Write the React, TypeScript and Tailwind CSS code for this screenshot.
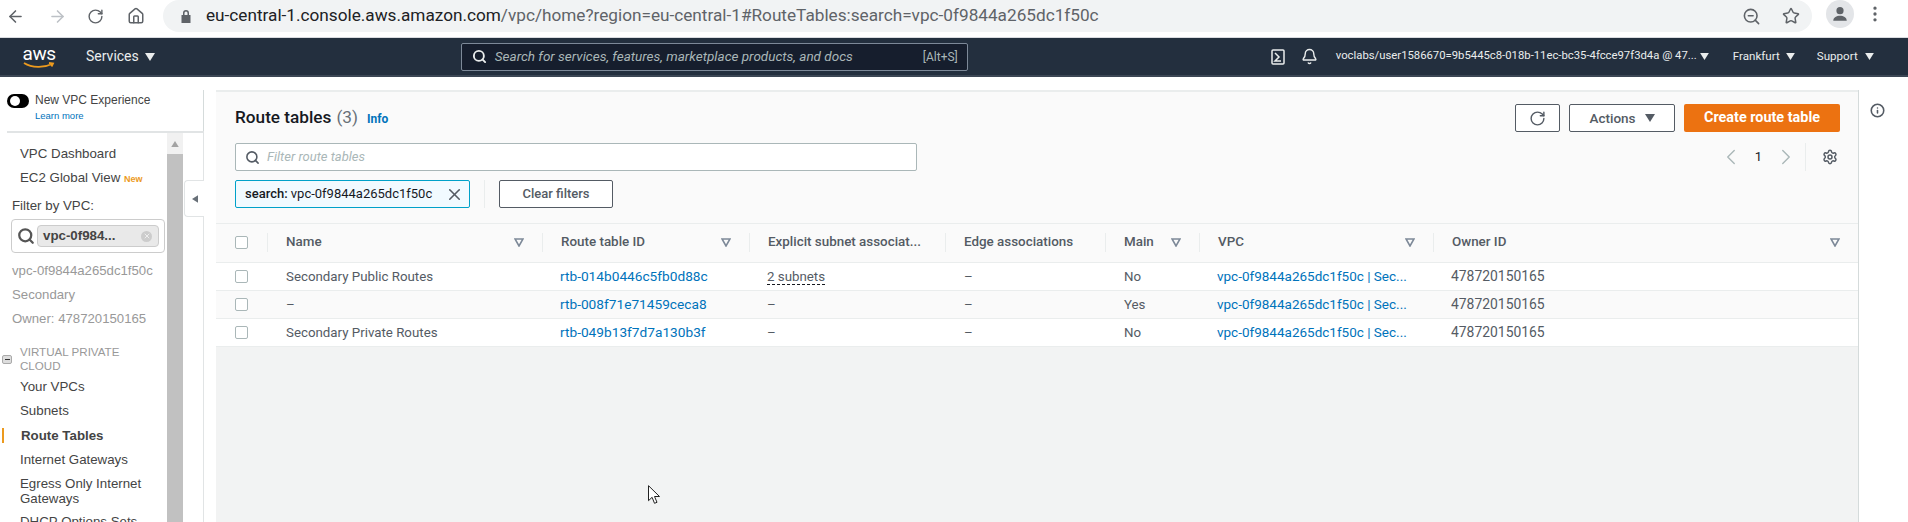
import { ArrowLeft, ArrowRight, ChevronLeft, ChevronRight, EllipsisVertical, House, Info, RotateCw, Search, Settings, Star, X, ZoomOut, Bell } from "lucide-react";

const cols = "grid grid-cols-[51px_275px_207px_196px_160px_94px_234px_1fr]";

const rows = [
  { name: "Secondary Public Routes", id: "rtb-014b0446c5fb0d88c", subnets: "2 subnets", main: "No", bg: "bg-white" },
  { name: "–", id: "rtb-008f71e71459ceca8", subnets: "–", main: "Yes", bg: "bg-[#fafafa]" },
  { name: "Secondary Private Routes", id: "rtb-049b13f7d7a130b3f", subnets: "–", main: "No", bg: "bg-white" },
];

function Caret({ className }: { className?: string }) {
  return (
    <svg viewBox="0 0 10 8" className={className} fill="currentColor">
      <path d="M0 0h10L5 8z" />
    </svg>
  );
}

function FilterIcon() {
  return (
    <svg viewBox="0 0 10 9" className="h-[9px] w-[10px] shrink-0 text-[#7d8998]" fill="none" stroke="currentColor" strokeWidth="1.6">
      <path d="M1 1h8L5 8z" />
    </svg>
  );
}

function Checkbox() {
  return <div className="size-[13px] rounded-[2px] border border-[#aab7b8] bg-white" />;
}

function HeadCell({ label, filter }: { label: string; filter?: boolean }) {
  return (
    <div className="flex items-center">
      <div className="flex h-[19px] w-full items-center justify-between border-l border-[#eaeded] pl-[18px] pr-[18px]">
        <span className="text-[13.400px] font-medium text-[#545b64]">{label}</span>
        {filter && <FilterIcon />}
      </div>
    </div>
  );
}

function BrowserBar() {
  return (
    <div className="flex h-[38px] items-start border-b border-[#dadce0] bg-white text-[#5f6368]">
      <div className="flex h-[32px] w-[163px] items-center pl-[6px]">
        <ArrowLeft className="size-[19px]" />
        <ArrowRight className="ml-[23px] size-[19px] text-[#bdc1c6]" />
        <RotateCw className="ml-[20px] size-[17px]" />
        <House className="ml-[23px] size-[18px]" />
      </div>
      <div className="flex h-[32px] w-[1649px] items-center rounded-r-full rounded-l-full bg-[#f1f3f4] pl-[17px] pr-[12px]">
        <svg viewBox="0 0 12 14" className="h-[14px] w-[12px]" fill="currentColor">
          <path d="M3 6V4a3 3 0 0 1 6 0v2h1.500v8h-9V6zM4.500 6h3V4a1.500 1.500 0 0 0-3 0z" />
        </svg>
        <span className="ml-[14px] font-['Roboto',sans-serif] text-[17.200px] text-[#202124]">
          eu-central-1.console.aws.amazon.com<span className="text-[#5f6368]">/vpc/home?region=eu-central-1#RouteTables:search=vpc-0f9844a265dc1f50c</span>
        </span>
        <ZoomOut className="ml-auto size-[19px]" />
        <Star className="ml-[21px] size-[18px]" />
      </div>
      <div className="ml-[14px] flex size-[28px] items-center justify-center rounded-full bg-[#e3e5e8]">
        <svg viewBox="0 0 16 16" className="size-[18px]" fill="#5f6368">
          <circle cx="8" cy="5" r="3.200" />
          <path d="M2 14c0-3 3-4.500 6-4.500s6 1.500 6 4.500z" />
        </svg>
      </div>
      <EllipsisVertical className="ml-[11px] mt-[4px] size-[20px]" />
    </div>
  );
}

function TopNav() {
  return (
    <div className="flex h-[39px] items-center border-b-2 border-[#3b4654] bg-[#232f3e] font-['Roboto',sans-serif] text-[#eaeded]">
      <div className="ml-[23px] flex w-[32px] flex-col items-center">
        <span className="text-[19px] leading-[17px] tracking-[-0.5px] text-white">aws</span>
        <svg viewBox="0 0 32 7" className="h-[7px] w-[32px]" fill="none" stroke="#ec9a1e" strokeWidth="1.800">
          <path d="M1 1c8 5 20 5 28 1M26 1l4 .5-1.500 3" />
        </svg>
      </div>
      <span className="ml-[31px] text-[14px]">Services</span>
      <Caret className="ml-[6px] h-[8px] w-[10px]" />
      <div className="ml-[306px] flex h-[28px] w-[507px] items-center rounded-[2px] border border-[#7d8998] bg-[#161e2d] pl-[10px] pr-[9px]">
        <Search className="size-[15px] text-[#eaeded]" strokeWidth={3} />
        <span className="ml-[8px] text-[13.500px] italic text-[#aab7b8]">Search for services, features, marketplace products, and docs</span>
        <span className="ml-auto text-[12px] text-[#aab7b8]">[Alt+S]</span>
      </div>
      <svg viewBox="0 0 14 16" className="ml-[303px] h-[16px] w-[14px]" fill="none" stroke="#eaeded" strokeWidth="1.500">
        <rect x="1" y="1" width="12" height="14" rx="1" />
        <path d="M4 4l4 4-4 4h6" />
      </svg>
      <Bell className="ml-[16px] size-[17px]" />
      <span className="ml-[18px] w-[358px] whitespace-nowrap text-[11.300px]">voclabs/user1586670=9b5445c8-018b-11ec-bc35-4fcce97f3d4a @ 47...</span>
      <Caret className="ml-[6px] h-[7px] w-[9px]" />
      <span className="ml-[24px] text-[11.600px]">Frankfurt</span>
      <Caret className="ml-[6px] h-[7px] w-[9px]" />
      <span className="ml-[22px] text-[11.600px]">Support</span>
      <Caret className="ml-[7px] h-[7px] w-[9px]" />
    </div>
  );
}

function NavItem({ children, className }: { children: React.ReactNode; className?: string }) {
  return <div className={`pl-[20px] text-[13.300px] text-[#444] ${className ?? ""}`}>{children}</div>;
}

function Sidebar() {
  return (
    <div className="relative flex w-[204px] shrink-0 flex-col font-['Liberation_Sans',sans-serif]">
      <div className="ml-[7px] flex h-[56px] shrink-0 border-b-2 border-[#e1e4e5] pt-[13px]">
        <div className="mt-[4px] flex h-[14px] w-[22px] shrink-0 items-center justify-end rounded-full bg-black pr-[1px]">
          <div className="mr-[8px] size-[10px] rounded-full bg-white" />
        </div>
        <div className="ml-[6px] flex-1 border-r border-[#d5dbdb]">
          <div className="mt-[3px] text-[12px] leading-[14px] text-[#444]">New VPC Experience</div>
          <div className="mt-[3px] text-[9.500px] leading-[12px] text-[#0073bb]">Learn more</div>
        </div>
      </div>
      <div className="flex min-h-0 flex-1">
        <div className="w-[167px] shrink-0 overflow-hidden pt-[11px]">
          <NavItem className="h-[24px] leading-[20px]">VPC Dashboard</NavItem>
          <NavItem className="h-[24px] leading-[20px]">
            EC2 Global View <span className="text-[9px] font-bold text-[#ec9a1e]">New</span>
          </NavItem>
          <div className="pl-[12px] pt-[4px] text-[13.300px] leading-[20px] text-[#444]">Filter by VPC:</div>
          <div className="ml-[11px] mt-[3px] flex h-[34px] w-[154px] items-center rounded-[4px] border border-[#ccc] pl-[5px]">
            <Search className="size-[18px] text-[#555]" strokeWidth={3} />
            <div className="ml-[2px] flex h-[22px] w-[122px] items-center justify-between rounded-[4px] border border-[#ccc] bg-[#e9e9e9] pl-[5px] pr-[6px]">
              <span className="text-[13.300px] font-bold text-[#444]">vpc-0f984...</span>
              <div className="flex size-[11px] items-center justify-center rounded-full bg-[#ccc]">
                <X className="size-[8px] text-[#eee]" strokeWidth={3} />
              </div>
            </div>
          </div>
          <div className="pl-[12px] pt-[6px] text-[13.200px] leading-[24px] text-[#999]">
            <div>vpc-0f9844a265dc1f50c</div>
            <div>Secondary</div>
            <div>Owner: 478720150165</div>
          </div>
          <div className="mt-[14px] flex items-center pl-[2px] text-[11.600px] leading-[14px] text-[#999]">
            <div className="flex h-[9px] w-[10px] items-center justify-center rounded-[2px] border border-[#aaa] bg-[#ddd]">
              <div className="h-[1px] w-[5px] bg-[#333]" />
            </div>
            <div className="ml-[8px]">
              VIRTUAL PRIVATE
              <br />
              CLOUD
            </div>
          </div>
          <NavItem className="mt-[2px] h-[24px] leading-[24px]">Your VPCs</NavItem>
          <NavItem className="h-[24px] leading-[24px]">Subnets</NavItem>
          <div className="ml-[2px] mt-[1px] h-[24px] border-l-2 border-transparent pl-[17px] text-[13.300px] font-bold leading-[24px] text-[#444]">
            <span className="relative">
              Route Tables
              <span className="absolute left-[-19px] top-[0px] h-[15px] w-[2px] bg-[#ec9a1e]" />
            </span>
          </div>
          <NavItem className="h-[24px] leading-[24px]">Internet Gateways</NavItem>
          <NavItem className="mt-[4px] leading-[15px]">
            Egress Only Internet
            <br />
            Gateways
          </NavItem>
          <NavItem className="mt-[8px] leading-[16px]">DHCP Options Sets</NavItem>
        </div>
        <div className="flex w-[16px] shrink-0 flex-col">
          <div className="flex h-[21px] items-center justify-center bg-[#f1f1f1]">
            <Caret className="h-[6px] w-[10px] rotate-180 text-[#a3a3a3]" />
          </div>
          <div className="flex-1 bg-[#c1c1c1]" />
        </div>
        <div className="flex-1 border-r border-[#e1e4e5]" />
      </div>
      <div className="absolute left-[184px] top-[103px] flex h-[37px] w-[20px] items-center justify-center rounded-l-[4px] border border-r-0 border-[#e1e4e5] bg-white">
        <Caret className="h-[6px] w-[10px] rotate-90 text-[#687078]" />
      </div>
    </div>
  );
}

function Main() {
  return (
    <div className="flex w-[1642px] shrink-0 flex-col bg-white font-['Roboto',sans-serif]">
      <div className="mt-[13px] h-[133px] shrink-0 border-t-2 border-[#eaeded] bg-[#fafafa] pl-[19px] pr-[18px]">
        <div className="flex h-[41px] items-center pt-[11px]">
          <span className="text-[17.200px] font-medium text-[#16191f]">Route tables</span>
          <span className="ml-[5px] text-[17.200px] text-[#687078]">(3)</span>
          <span className="ml-[9px] mt-[2px] text-[12px] font-bold text-[#0073bb]">Info</span>
          <div className="ml-auto flex items-start">
            <div className="flex h-[28px] w-[45px] items-center justify-center rounded-[2px] border border-[#545b64] bg-white">
              <RotateCw className="size-[17px] text-[#545b64]" />
            </div>
            <div className="ml-[9px] flex h-[28px] w-[106px] items-center justify-center rounded-[2px] border border-[#545b64] bg-white text-[13.500px] font-medium text-[#545b64]">
              Actions
              <Caret className="ml-[9px] h-[8px] w-[10px]" />
            </div>
            <div className="ml-[9px] flex h-[28px] w-[156px] items-center justify-center rounded-[2px] bg-[#ec7211] text-[14.400px] font-bold text-white">
              Create route table
            </div>
          </div>
        </div>
        <div className="mt-[10px] flex h-[28px] items-center">
          <div className="flex h-[28px] w-[682px] items-center rounded-[2px] border border-[#aab7b8] bg-white pl-[9px]">
            <Search className="size-[15px] text-[#545b64]" strokeWidth={2.500} />
            <span className="ml-[7px] text-[13px] italic text-[#aab7b8]">Filter route tables</span>
          </div>
          <div className="ml-auto flex h-[28px] items-center">
            <ChevronLeft className="size-[26px] text-[#aab7b8]" strokeWidth={1.300} />
            <span className="ml-[11px] text-[13px] text-[#16191f]">1</span>
            <ChevronRight className="ml-[11px] size-[26px] text-[#aab7b8]" strokeWidth={1.300} />
            <div className="ml-[6px] h-[28px] border-l border-[#eaeded]" />
            <Settings className="ml-[16px] mr-[2px] size-[16px] text-[#545b64]" strokeWidth={2.200} />
          </div>
        </div>
        <div className="mt-[9px] flex h-[28px] items-center">
          <div className="flex h-[28px] w-[235px] items-center justify-between rounded-[2px] border border-[#00a1c9] bg-[#f1faff] pl-[9px] pr-[5px] text-[13px] text-[#16191f]">
            <span>
              <span className="font-medium">search:</span> vpc-0f9844a265dc1f50c
            </span>
            <X className="size-[19px] shrink-0 text-[#545b64]" strokeWidth={2} />
          </div>
          <div className="ml-[14px] h-[28px] border-l border-[#eaeded]" />
          <div className="ml-[14px] flex h-[28px] w-[114px] items-center justify-center rounded-[2px] border border-[#545b64] bg-white text-[13px] font-medium text-[#545b64]">
            Clear filters
          </div>
        </div>
      </div>
      <div className={`${cols} h-[40px] shrink-0 border-y border-[#eaeded] bg-[#fafafa] pb-[2px]`}>
        <div className="flex items-center pl-[19px]">
          <Checkbox />
        </div>
        <HeadCell label="Name" filter />
        <HeadCell label="Route table ID" filter />
        <HeadCell label="Explicit subnet associat..." />
        <HeadCell label="Edge associations" />
        <HeadCell label="Main" filter />
        <HeadCell label="VPC" filter />
        <HeadCell label="Owner ID" filter />
      </div>
      {rows.map((row) => (
        <div key={row.id} className={`${cols} ${row.bg} h-[28px] shrink-0 items-center border-b border-[#eaeded] text-[13.300px] text-[#545b64]`}>
          <div className="pl-[19px]">
            <Checkbox />
          </div>
          <div className="pl-[19px]">{row.name}</div>
          <div className="pl-[18px] text-[13.700px] text-[#0073bb]">{row.id}</div>
          <div className="pl-[18px]">
            {row.subnets === "–" ? row.subnets : <span className="border-b border-dashed border-[#16191f]">{row.subnets}</span>}
          </div>
          <div className="pl-[19px]">–</div>
          <div className="pl-[19px]">{row.main}</div>
          <div className="pl-[18px] text-[13.500px] text-[#0073bb]">vpc-0f9844a265dc1f50c | Sec...</div>
          <div className="pl-[18px] text-[13.900px]">478720150165</div>
        </div>
      ))}
      <div className="flex-1 bg-[#f2f3f3]" />
    </div>
  );
}

export default function App() {
  return (
    <div className="relative flex h-[522px] w-[1908px] flex-col overflow-hidden bg-white">
      <BrowserBar />
      <TopNav />
      <div className="flex min-h-0 flex-1">
        <Sidebar />
        <div className="w-[12px] shrink-0" />
        <Main />
        <div className="mt-[13px] flex-1 border-l border-[#d5dbdb] pt-[11px]">
          <Info className="ml-[11px] mt-[2px] size-[15px] text-[#545b64]" strokeWidth={2.500} />
        </div>
      </div>
      {/* mouse pointer caught in the screenshot */}
      <svg viewBox="0 0 12 20" className="absolute left-[648px] top-[485px] h-[20px] w-[12px]" fill="white" stroke="#222" strokeWidth="1">
        <path d="M.5.700v15l3.600-3.400 2.400 6 2.500-1-2.500-5.800h5z" />
      </svg>
    </div>
  );
}
